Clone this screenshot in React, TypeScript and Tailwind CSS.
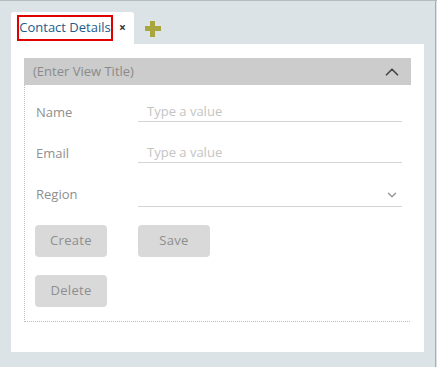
import { ChevronUp, ChevronDown } from "lucide-react";

const font = { fontFamily: '"Open Sans", "Liberation Sans", sans-serif' };

function Field({
  label,
  placeholder,
  select,
  h,
}: {
  label: string;
  placeholder?: string;
  select?: boolean;
  h: string;
}) {
  return (
    <div className={`flex items-end ${h}`}>
      <div className={`w-[102px] text-[13px] text-[#8f8f8f] ${select ? "pb-[3px]" : "pb-0"}`}>{label}</div>
      <div className="w-[264px] border-b border-[#d4d4d4] h-[28px] flex items-end justify-between text-[13px] text-[#c4c4c4]">
        <span className="pl-[9px]">{placeholder}</span>
        {select && <ChevronDown size={14} strokeWidth={2.5} className="text-[#9a9a9a] mr-[3px] mb-[4px]" />}
      </div>
    </div>
  );
}

function Btn({ children }: { children: string }) {
  return (
    <button className="w-[72px] h-[32px] rounded-[4px] bg-[#d9d9d9] text-[13px] text-[#8e8e8e] tracking-[0.3px]">
      {children}
    </button>
  );
}

export default function App() {
  return (
    <div
      className="w-[437px] h-[367px] bg-[#dce3e6] border-t border-[#b6babd] relative overflow-hidden"
      style={font}
    >
      <div className="absolute right-[1px] top-0 bottom-0 w-px bg-[#a9adb0]" />
      <div className="pl-[11px] pt-[11px]">
        {/* tabs */}
        <div className="flex items-end h-[32px]">
          <div className="w-[123px] h-[32px] bg-white rounded-t-[3px] flex items-center pl-[6px]">
            <div className="border-2 border-[#e00000] h-[26px] w-[96px] flex items-center justify-center text-[13px] text-[#1d5b8a]">
              Contact Details
            </div>
            <span className="ml-[6px] text-[12px] text-[#333] font-bold">×</span>
          </div>
          <div className="ml-[11px] mb-[7px] relative w-[16px] h-[16px]">
            <div className="absolute left-[5px] top-0 w-[5px] h-[16px] bg-[#a8a63c]" />
            <div className="absolute left-0 top-[5px] w-[16px] h-[5px] bg-[#a8a63c]" />
          </div>
        </div>
        {/* panel */}
        <div className="w-[413px] h-[308px] bg-white pl-[13px] pt-[14px]">
          <div className="w-[387px] h-[27px] bg-[#cccccc] flex items-center justify-between pl-[9px] pr-[8px]">
            <span className="text-[13px] text-[#8a8a8a]">(Enter View Title)</span>
            <ChevronUp size={22} strokeWidth={1.8} className="text-[#444]" />
          </div>
          <div className="w-[386px] h-[237px] border-l border-b border-dotted border-[#bdbdbd] pl-[11px]">
            <Field label="Name" placeholder="Type a value" h="h-[37px]" />
            <Field label="Email" placeholder="Type a value" h="h-[41px]" />
            <Field label="Region" select h="h-[44px]" />
            <div className="flex gap-[31px] mt-[18px] -ml-px">
              <Btn>Create</Btn>
              <Btn>Save</Btn>
            </div>
            <div className="mt-[18px] -ml-px">
              <Btn>Delete</Btn>
            </div>
          </div>
        </div>
      </div>
    </div>
  );
}
